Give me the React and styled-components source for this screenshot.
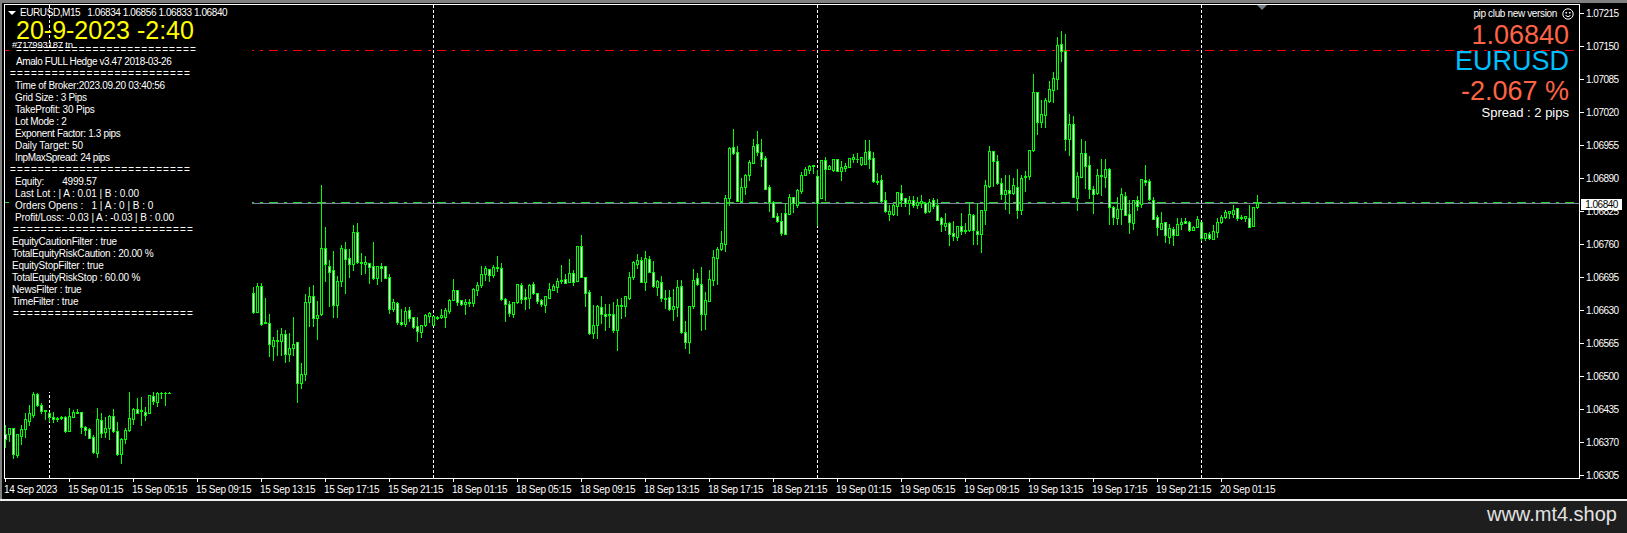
import React from 'react';
import styled, { createGlobalStyle } from 'styled-components';

const GlobalStyle = createGlobalStyle`
  html, body { margin: 0; padding: 0; background: #000; }
  body { font-family: "Liberation Sans", Arial, sans-serif; }
`;

const GREEN = '#00ff00';

// candle rows: [high, low, body top, body bottom, bear fill], y read at 3x from the chart
const SERIES = [
  { x: 5, y: 380, rows: [
    [135,200,163,178,1],[145,183,145,163,0],[145,233,145,223,1],[163,230,163,225,0],[135,192,148,167,0],
    [100,172,118,147,0],[75,135,100,122,0],[37,110,43,105,0],[40,78,43,76,1],[70,98,76,94,1],
    [90,116,90,92,0],[97,122,98,111,1],[97,125,112,116,1],[111,123,113,117,0],[108,116,110,113,1],
    [108,155,110,153,1],[85,153,108,152,0],[90,112,97,110,0],[87,98,96,99,0],[96,160,97,142,1],
    [138,165,140,149,1],[145,175,147,173,1],[165,218,170,215,1],[85,232,118,218,0],[100,172,119,158,1],
    [110,172,145,156,0],[105,178,107,144,0],[88,155,108,153,1],[125,225,153,221,1],[175,248,178,221,0],
    [145,188,151,177,0],[37,152,115,150,0],[85,132,88,116,0],[55,100,88,98,1],[52,135,91,94,0],
    [82,120,95,106,1],[45,100,46,100,0],[37,73,48,62,1],[37,78,38,65,0],[37,55,38,38,0],[37,75,38,38,0],[37,39,38,38,0],
  ] },
  { x: 253, y: 170, rows: [
    [350,428,370,425,1],[338,425,348,425,0],[340,465,348,462,1],[385,460,456,460,0],[432,557,460,523,1],
    [502,570,511,527,0],[480,555,511,513,0],[475,555,492,513,0],[480,575,492,553,1],[490,572,535,552,0],
    [442,555,523,533,0],[516,695,517,638,1],[580,653,613,638,0],[373,630,397,613,0],[351,468,379,395,0],
    [346,468,379,443,1],[393,507,436,443,0],[45,435,235,433,0],[171,333,235,281,1],[270,407,289,305,1],
    [243,441,301,404,1],[318,441,334,406,0],[225,348,235,332,0],[217,369,238,266,1],[237,321,265,281,1],
    [165,300,187,281,0],[159,278,187,275,1],[250,312,276,279,0],[258,309,277,281,0],[280,339,280,290,1],
    [217,328,287,324,1],[288,342,289,323,0],[279,333,289,293,1],[289,324,289,323,1],[312,429,322,418,1],
    [388,423,397,416,0],[397,461,400,457,1],[418,465,456,462,1],[412,468,424,461,0],[412,452,421,443,1],
    [440,474,442,472,1],[441,513,469,484,1],[466,501,466,485,0],[432,468,436,466,0],[427,456,428,437,0],
    [438,465,439,464,0],[438,447,440,443,1],[417,443,435,442,0],[415,470,420,440,0],[387,428,389,422,0],
    [327,391,361,389,0],[361,405,361,395,1],[390,405,391,403,1],[388,432,397,403,0],[388,408,397,399,0],
    [355,408,358,398,0],[337,375,346,359,0],[288,351,313,346,0],[288,330,295,312,0],[296,333,298,314,1],
    [285,321,292,314,0],[258,304,292,294,0],
  ] },
  { x: 501, y: 110, rows: [
    [460,570,473,568,1],[563,632,566,583,1],[573,617,583,610,1],[575,620,577,613,0],[523,578,523,577,0],
    [519,578,526,566,1],[538,596,562,566,1],[523,593,526,563,0],[516,552,523,550,1],[548,578,550,574,1],
    [567,587,571,583,1],[559,606,559,584,0],[519,563,538,563,0],[521,540,529,539,0],[505,546,514,530,0],
    [465,520,510,512,0],[493,520,508,518,1],[447,515,490,515,0],[481,525,490,515,1],[408,513,408,512,0],
    [375,502,408,500,1],[502,588,502,548,1],[540,672,547,670,1],[586,683,646,670,0],[585,684,588,646,0],
    [558,638,592,613,1],[583,660,612,617,1],[583,652,613,614,0],[575,665,613,659,1],[567,720,586,659,0],
    [563,625,584,587,0],[557,617,557,587,0],[487,566,502,563,0],[454,506,457,500,0],[432,474,451,461,0],
    [441,516,451,515,1],[423,540,445,515,0],[438,487,447,485,1],[453,530,485,527,1],[510,555,512,530,0],
    [498,574,515,563,1],[540,594,565,566,0],[540,600,562,598,1],[537,630,589,596,0],[510,618,530,590,0],
    [510,668,527,667,1],[633,713,665,695,1],[587,728,589,695,0],[477,595,511,587,0],[490,525,505,523,1],
    [472,660,523,613,1],[545,657,569,613,0],[480,572,508,572,0],[420,525,442,509,0],[411,522,418,443,0],
    [363,420,400,418,0],[255,422,265,401,0],[112,285,115,265,0],[58,131,112,130,1],[108,273,127,272,1],
    [205,273,230,272,0],[193,252,196,230,0],[150,210,157,194,0],[87,160,109,158,0],[63,135,103,127,1],
  ] },
  { x: 761, y: 110, rows: [
    [87,167,127,146,1],[138,238,145,236,1],[225,303,232,275,1],[273,322,275,320,1],[310,336,318,334,1],
    [309,375,334,369,1],[280,373,310,372,1],[252,312,262,311,0],[262,305,262,280,1],[238,290,241,285,0],
    [186,248,196,242,0],[170,195,178,194,0],[166,188,167,179,0],[166,190,166,168,0],[180,345,199,280,1],
    [150,263,151,263,0],[140,270,151,176,1],[165,178,168,176,0],[148,182,148,180,0],[148,183,148,182,1],
    [152,209,172,182,0],[160,183,168,173,0],[145,172,145,170,0],[132,155,142,147,0],[130,155,146,146,0],
    [140,165,142,161,0],[91,162,127,161,0],[91,175,124,146,1],[126,215,145,213,1],[190,222,213,216,0],
    [195,275,211,272,1],[246,306,271,304,1],[285,330,304,311,0],[283,315,286,312,0],[247,315,247,287,0],
    [225,287,250,269,1],[263,288,265,278,1],[258,312,270,280,0],[258,292,271,285,1],[262,294,275,285,0],
    [255,290,274,280,0],[275,308,278,305,1],[268,305,275,302,0],[265,293,271,289,1],[267,331,286,329,1],
    [321,363,325,341,1],[309,360,340,347,0],[337,405,340,373,1],[333,390,370,377,1],[347,390,349,380,0],
    [309,372,349,362,1],[340,368,360,364,0],[280,362,313,360,0],[313,402,316,361,1],[280,402,364,371,1],
    [300,425,301,371,0],[210,342,226,301,0],[108,230,124,228,0],[123,228,124,153,1],[136,222,154,220,1],
  ] },
  { x: 1001, y: 20, rows: [
    [475,538,490,523,1],[465,567,511,521,0],[465,578,511,520,1],[475,523,496,518,0],[447,593,500,571,1],
    [465,581,475,571,0],[452,513,468,472,0],[390,476,391,467,0],[162,392,217,391,0],[217,342,217,305,1],
    [240,320,281,305,0],[235,320,241,284,0],[182,245,208,242,0],[157,245,173,209,0],[52,207,76,176,0],
    [33,123,73,92,1],[42,390,92,358,1],[282,405,313,356,0],[288,532,313,530,1],[457,570,469,533,0],
    [358,470,400,470,0],[363,503,400,437,1],[408,535,436,508,1],[498,578,508,521,1],[447,522,466,520,0],
    [417,525,465,467,0],[417,500,448,470,0],[445,612,448,562,1],[558,612,562,590,1],[530,612,568,593,0],
    [505,612,523,566,0],[517,585,527,584,1],[540,640,583,607,1],[540,627,541,608,0],[527,570,541,557,1],
    [478,560,478,553,0],[435,495,479,487,1],[477,540,484,538,1],[532,597,541,596,1],[585,645,592,622,1],
    [575,627,610,627,0],[605,665,606,646,1],[613,670,625,650,0],[620,675,628,644,1],[595,645,613,644,0],
    [595,627,607,613,0],[595,610,602,608,1],[602,632,607,630,1],[618,630,620,629,0],[587,622,597,621,0],
    [607,660,607,655,1],[640,660,640,654,0],[635,657,641,655,1],[615,657,634,656,0],[595,652,607,637,0],
    [585,610,592,607,0],[570,594,577,592,0],[573,594,574,580,0],[555,592,569,582,0],[563,600,565,593,1],
    [585,596,592,593,0],[588,603,589,593,0],[555,622,593,620,1],[560,617,562,617,0],[525,563,549,560,0],
  ] },
];

const CANDLES = SERIES.flatMap(({ x, y, rows }) =>
  rows.map(([hi, lo, top, bottom, bear], i) => ({
    x: x + i * 4,
    hi: y + Math.round(hi / 3),
    lo: y + Math.round(lo / 3),
    top: y + Math.round(Math.min(top, bottom) / 3),
    bottom: y + Math.round(Math.max(top, bottom) / 3),
    bear,
  }))
);

const SEPARATORS = [49, 433, 817, 1201];

const RULE = '==========================';

// track: the terminal's bitmap font runs wider or narrower per line than the fallback does
const INFO_ROWS = [
  { indent: 11, text: RULE, track: 1.12 },
  { indent: 11, text: 'Amalo FULL Hedge v3.47 2018-03-26', track: -0.4 },
  { indent: 5, text: RULE, track: 1.12 },
  { indent: 10, text: 'Time of Broker:2023.09.20 03:40:56', track: -0.29 },
  { indent: 10, text: 'Grid Size : 3 Pips', track: -0.31 },
  { indent: 10, text: 'TakeProfit: 30 Pips' },
  { indent: 10, text: 'Lot Mode : 2', track: -0.35 },
  { indent: 10, text: 'Exponent Factor: 1.3 pips', track: -0.34 },
  { indent: 10, text: 'Daily Target: 50', track: -0.08 },
  { indent: 10, text: 'InpMaxSpread: 24 pips', track: -0.39 },
  { indent: 5, text: RULE, track: 1.12 },
  { indent: 10, text: 'Equity:       4999.57' },
  { indent: 10, text: 'Last Lot : | A : 0.01 | B : 0.00', track: -0.04 },
  { indent: 10, text: 'Orders Opens :   1 | A : 0 | B : 0', track: -0.01 },
  { indent: 10, text: 'Profit/Loss: -0.03 | A : -0.03 | B : 0.00', track: -0.1 },
  { indent: 8, text: RULE, track: 1.12 },
  { indent: 7, text: 'EquityCautionFilter : true' },
  { indent: 7, text: 'TotalEquityRiskCaution : 20.00 %' },
  { indent: 7, text: 'EquityStopFilter : true' },
  { indent: 7, text: 'TotalEquityRiskStop : 60.00 %' },
  { indent: 7, text: 'NewsFilter : true' },
  { indent: 7, text: 'TimeFilter : true' },
  { indent: 8, text: RULE, track: 1.12 },
];

const PRICES = [
  '1.07215', '1.07150', '1.07085', '1.07020', '1.06955', '1.06890', '1.06825', '1.06760',
  '1.06695', '1.06630', '1.06565', '1.06500', '1.06435', '1.06370', '1.06305',
];

const TIMES = [
  '14 Sep 2023',
  '15 Sep 01:15', '15 Sep 05:15', '15 Sep 09:15', '15 Sep 13:15', '15 Sep 17:15', '15 Sep 21:15',
  '18 Sep 01:15', '18 Sep 05:15', '18 Sep 09:15', '18 Sep 13:15', '18 Sep 17:15', '18 Sep 21:15',
  '19 Sep 01:15', '19 Sep 05:15', '19 Sep 09:15', '19 Sep 13:15', '19 Sep 17:15', '19 Sep 21:15',
  '20 Sep 01:15',
];

const Window = styled.div`
  width: 1627px;
  height: 533px;
  display: flex;
  flex-direction: column;
  overflow: hidden;
  background: #000;
  color: #fff;
`;
const TopStrip = styled.div`
  height: 3px;
  background: #808080;
  flex: none;
`;
const Terminal = styled.div`
  height: 496px;
  flex: none;
  box-sizing: border-box;
  border-left: 2px solid #808080;
  padding: 1px 0 0 2px;
`;
const ChartRow = styled.div`
  display: flex;
  height: 475px;
`;
const ChartPane = styled.div`
  position: relative;
  width: 1576px;
  flex: none;
  box-sizing: border-box;
  border: 1px solid #fff;
`;
const ChartSvg = styled.svg`
  display: block;
`;
const ScrollMark = styled.div`
  position: absolute;
  top: 0;
  left: 1252px;
  border-left: 5px solid transparent;
  border-right: 5px solid transparent;
  border-top: 5px solid #708090;
`;
const PanelMask = styled.div`
  position: absolute;
  left: 4px;
  top: 42px;
  width: 243px;
  height: 345px;
  background: #000;
`;
const InfoLayer = styled.div`
  position: absolute;
  left: 0;
  top: 0;
  padding-top: 2px;
  display: flex;
  flex-direction: column;
`;
const SmallText = styled.div`
  font-size: 10px;
  letter-spacing: -0.2px;
  white-space: pre;
`;
const SymbolRow = styled(SmallText)`
  display: flex;
  align-items: center;
  height: 12px;
  line-height: 12px;
  padding-left: 3px;
  letter-spacing: -0.42px;
`;
const SymbolArrow = styled.span`
  width: 0;
  height: 0;
  margin-right: 4px;
  border-left: 4px solid transparent;
  border-right: 4px solid transparent;
  border-top: 4px solid #fff;
`;
const Quotes = styled.span`
  margin-left: 7px;
`;
const ClockLine = styled.div`
  margin: 1px 0 0 11px;
  height: 20px;
  line-height: 20px;
  font-size: 25px;
  color: #ffff00;
  white-space: pre;
`;
const AccountLine = styled(SmallText)`
  height: 4px;
  line-height: 9px;
  padding-left: 7px;
  font-size: 9.5px;
`;
const InfoRow = styled(SmallText)`
  height: 12px;
  line-height: 12px;
  padding-left: ${(p) => p.$indent}px;
  letter-spacing: ${(p) => p.$track ?? -0.2}px;
`;
const QuoteBlock = styled.div`
  position: absolute;
  right: 10px;
  top: 3px;
  display: flex;
  flex-direction: column;
  align-items: flex-end;
`;
const VersionRow = styled(SmallText)`
  display: flex;
  align-items: center;
  height: 12px;
  line-height: 12px;
  margin-right: -5px;
  letter-spacing: -0.35px;
`;
const Smiley = styled.svg`
  display: block;
  margin-left: 5px;
`;
const BigQuote = styled.div`
  height: 26px;
  line-height: 26px;
  font-size: 27px;
  margin-top: ${(p) => p.$top}px;
  color: ${(p) => p.$color};
  white-space: pre;
`;
const SpreadLine = styled.div`
  height: 12px;
  line-height: 12px;
  margin-top: 3px;
  font-size: 13px;
`;
const PriceAxis = styled.div`
  position: relative;
  flex: 1;
  padding-top: 4px;
`;
const PriceRow = styled.div`
  display: flex;
  height: 33px;
`;
const PriceTick = styled.span`
  width: 4px;
  height: 1px;
  margin: 5px 2px 0 0;
  background: #fff;
`;
const AxisLabel = styled.span`
  font-size: 10px;
  line-height: 12px;
  height: 12px;
  letter-spacing: -0.5px;
  white-space: pre;
`;
const PriceTag = styled.div`
  position: absolute;
  left: 1px;
  top: 195px;
  width: 41px;
  height: 11px;
  background: #fff;
  color: #000;
  font-size: 10px;
  line-height: 11px;
  letter-spacing: -0.5px;
  text-align: center;
`;
const TimeAxis = styled.div`
  display: flex;
  height: 20px;
  padding-left: 1px;
`;
const TimeCell = styled.div`
  width: 64px;
  flex: none;
`;
const TimeTick = styled.div`
  width: 1px;
  height: 3px;
  background: #fff;
  margin-bottom: 2px;
`;
const TimeLabel = styled(AxisLabel)`
  display: block;
  margin-left: -1px;
  letter-spacing: -0.35px;
`;
const BottomRule = styled.div`
  height: 2px;
  flex: none;
  background: #f0f0f0;
`;
const Footer = styled.div`
  flex: 1;
  display: flex;
  justify-content: flex-end;
  background: #1e1e1e;
  color: #e2e2e2;
  font-size: 20px;
  line-height: 26px;
  padding-right: 10px;
`;

function Candle({ candle }) {
  const { x, hi, lo, top, bottom, bear } = candle;
  const h = bottom - top + 1;
  return (
    <>
      <rect x={x} y={hi} width="1" height={lo - hi + 1} fill={GREEN} />
      <rect x={x - 1} y={top} width="3" height={h} fill={GREEN} />
      {h > 2 && <rect x={x} y={top + 1} width="1" height={h - 2} fill={bear ? '#fff' : '#000'} />}
    </>
  );
}

function CandleChart() {
  return (
    <ChartSvg width="1574" height="473" shapeRendering="crispEdges">
      <g transform="translate(-5 -5)">
        {SEPARATORS.map((x) => (
          <line key={x} x1={x + 0.5} x2={x + 0.5} y1="5" y2="478" stroke="#fff" strokeDasharray="3 2" />
        ))}
        <line x1="5" x2="1574" y1="50.5" y2="50.5" stroke="#ff0000" strokeDasharray="9 6 3 6" />
        <line x1="5" x2="1574" y1="202.5" y2="202.5" stroke="#32cd32" strokeDasharray="9 6 3 6" />
        <line x1="252" x2="1579" y1="203.5" y2="203.5" stroke="#778899" />
        {CANDLES.map((c) => (
          <Candle key={c.x} candle={c} />
        ))}
      </g>
    </ChartSvg>
  );
}

export default function App() {
  return (
    <>
      <GlobalStyle />
      <Window>
        <TopStrip />
        <Terminal>
          <ChartRow>
            <ChartPane>
              <CandleChart />
              <ScrollMark />
              <PanelMask />
              <InfoLayer>
                <SymbolRow>
                  <SymbolArrow />
                  EURUSD,M15
                  <Quotes>1.06834 1.06856 1.06833 1.06840</Quotes>
                </SymbolRow>
                <ClockLine>20-9-2023 -2:40</ClockLine>
                <AccountLine>#717993187 tn</AccountLine>
                {INFO_ROWS.map((row, i) => (
                  <InfoRow key={i} $indent={row.indent} $track={row.track}>
                    {row.text}
                  </InfoRow>
                ))}
              </InfoLayer>
              <QuoteBlock>
                <VersionRow>
                  pip club new version
                  <Smiley width="12" height="12" viewBox="0 0 12 12" fill="none" stroke="#fff">
                    <circle cx="6" cy="6" r="5.2" />
                    <circle cx="4.2" cy="4.8" r="0.5" fill="#fff" />
                    <circle cx="7.8" cy="4.8" r="0.5" fill="#fff" />
                    <path d="M3.5 7.5 Q6 9.8 8.5 7.5" />
                  </Smiley>
                </VersionRow>
                <BigQuote $top={2} $color="#ff6347">1.06840</BigQuote>
                <BigQuote $top={0} $color="#00bfff">EURUSD</BigQuote>
                <BigQuote $top={4} $color="#ff6347">-2.067 %</BigQuote>
                <SpreadLine>Spread : 2 pips</SpreadLine>
              </QuoteBlock>
            </ChartPane>
            <PriceAxis>
              {PRICES.map((price) => (
                <PriceRow key={price}>
                  <PriceTick />
                  <AxisLabel>{price}</AxisLabel>
                </PriceRow>
              ))}
              <PriceTag>1.06840</PriceTag>
            </PriceAxis>
          </ChartRow>
          <TimeAxis>
            {TIMES.map((time) => (
              <TimeCell key={time}>
                <TimeTick />
                <TimeLabel>{time}</TimeLabel>
              </TimeCell>
            ))}
          </TimeAxis>
        </Terminal>
        <BottomRule />
        <Footer>www.mt4.shop</Footer>
      </Window>
    </>
  );
}
